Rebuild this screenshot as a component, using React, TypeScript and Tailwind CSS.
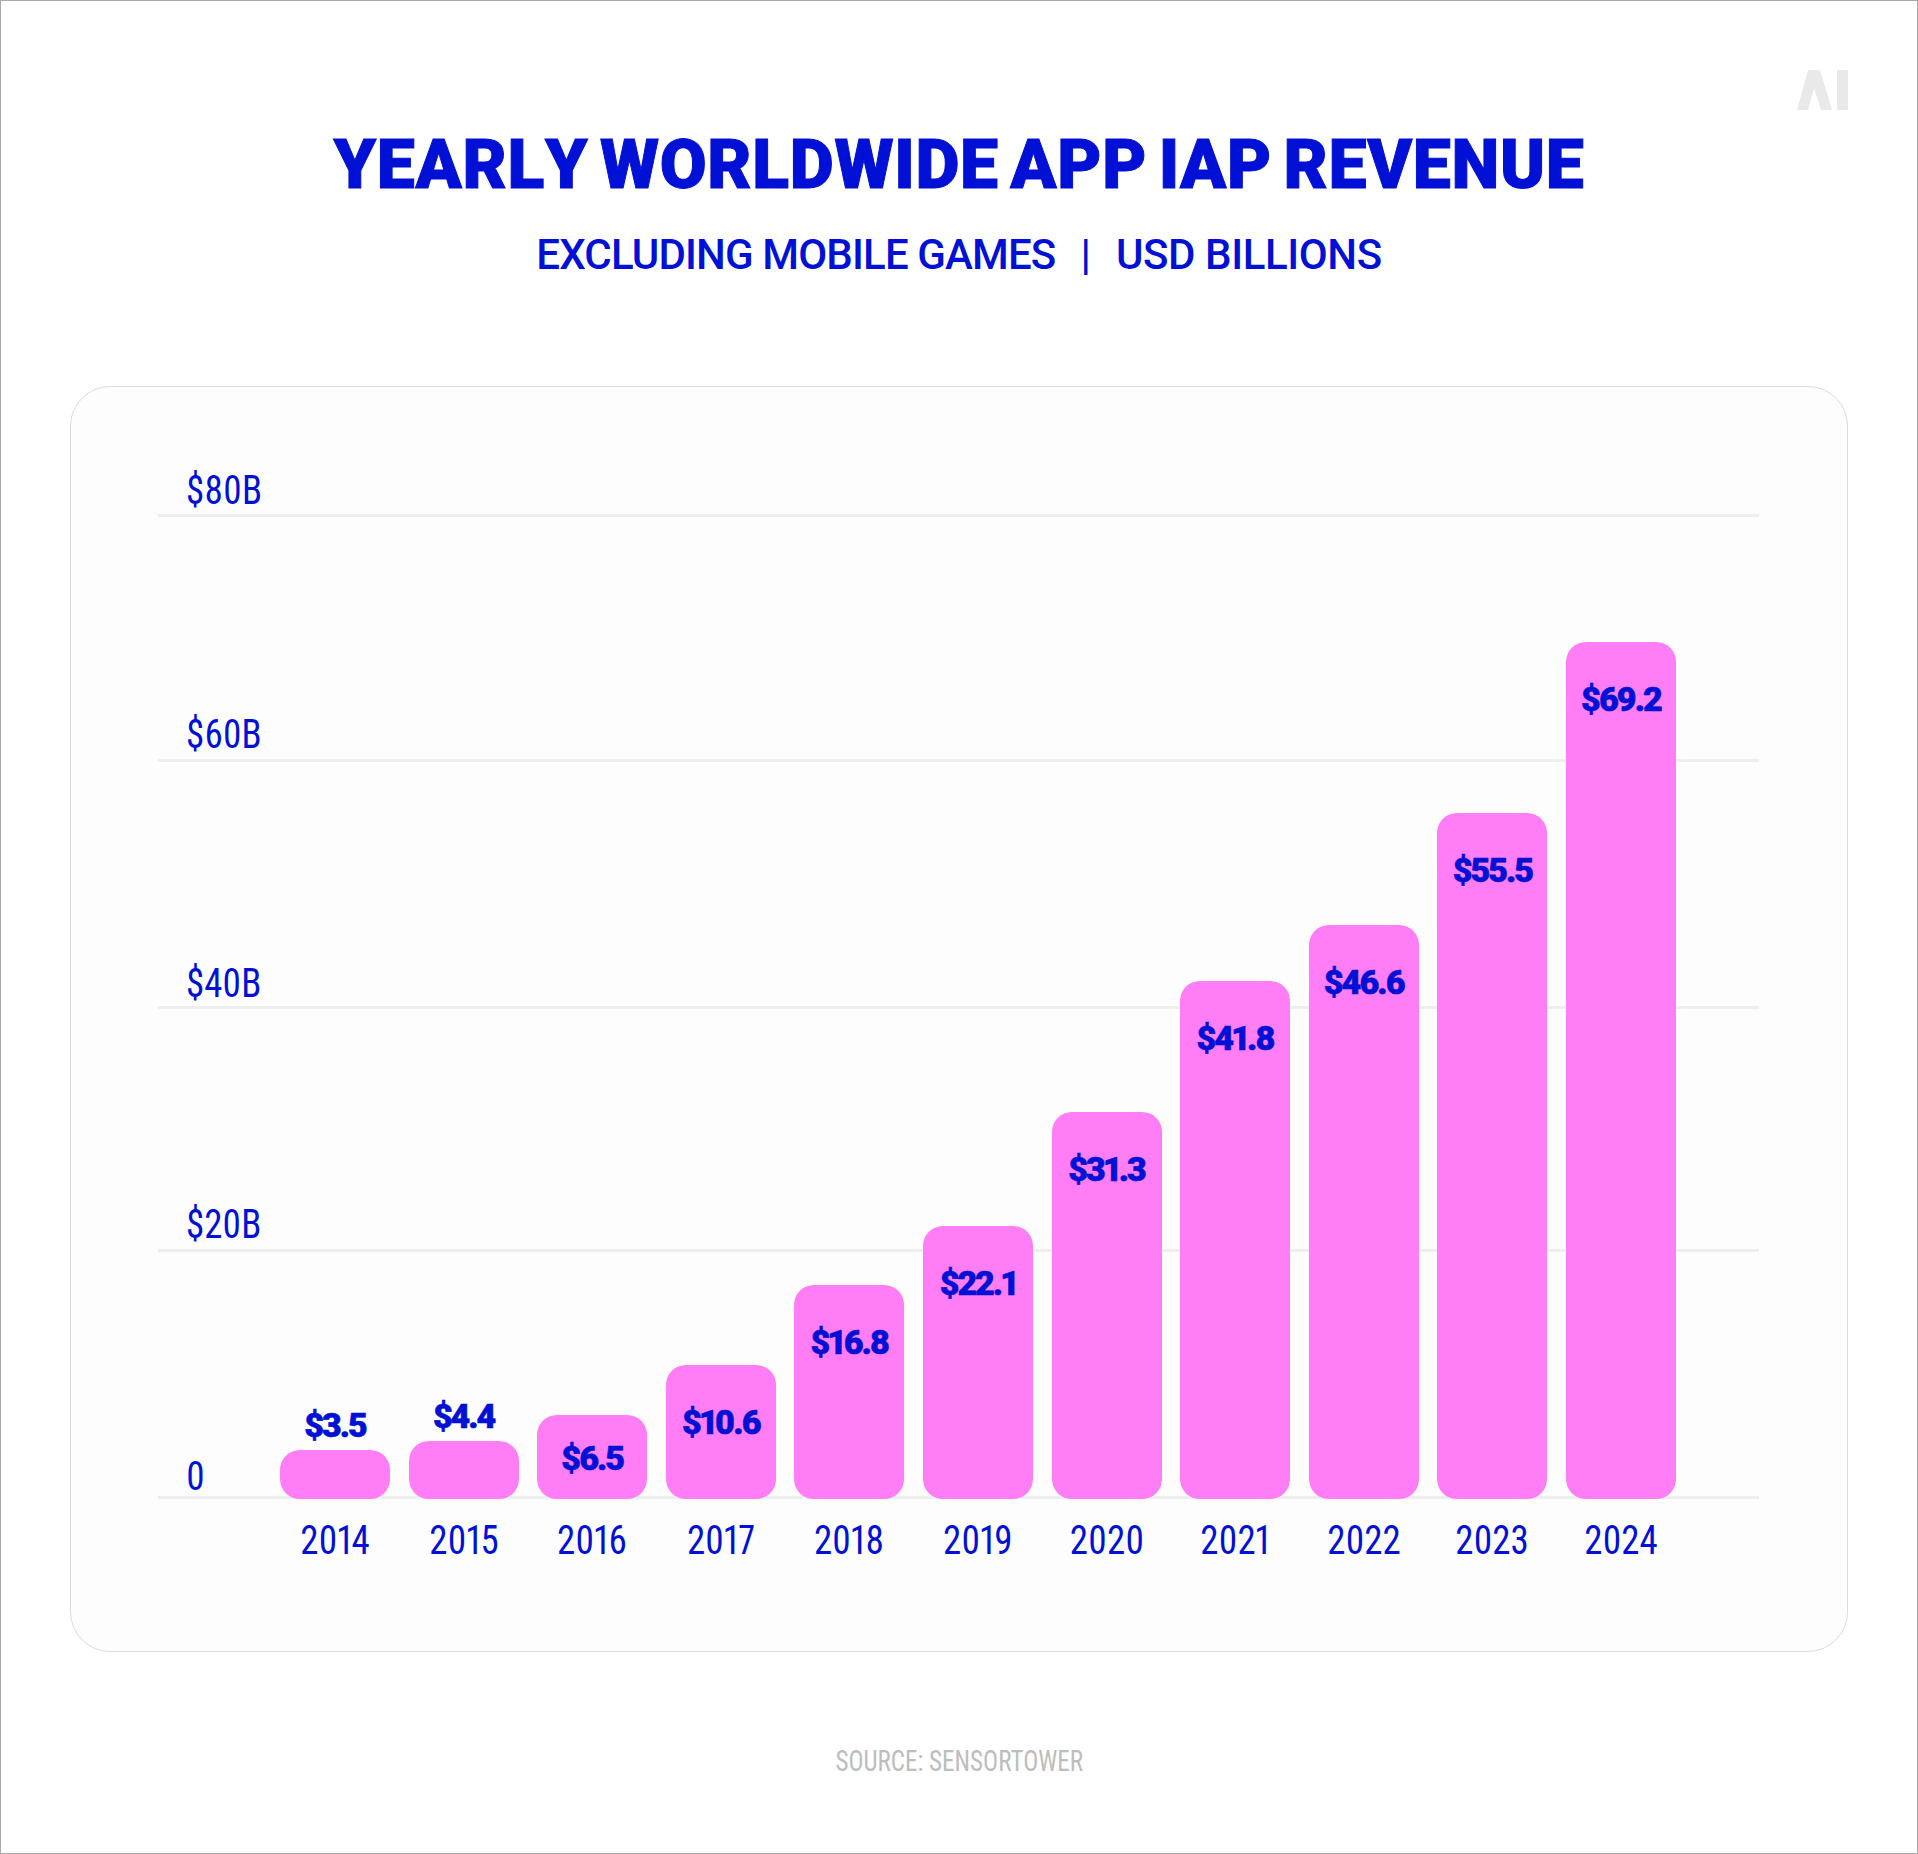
const BLUE = "text-[#0010d4]"

const bars = [
  { year: "2014", value: "$3.5", height: 49, place: "above" },
  { year: "2015", value: "$4.4", height: 58, place: "above" },
  { year: "2016", value: "$6.5", height: 84, place: "center" },
  { year: "2017", value: "$10.6", height: 134, place: "inside" },
  { year: "2018", value: "$16.8", height: 214, place: "inside" },
  { year: "2019", value: "$22.1", height: 273, place: "inside" },
  { year: "2020", value: "$31.3", height: 387, place: "inside" },
  { year: "2021", value: "$41.8", height: 518, place: "inside" },
  { year: "2022", value: "$46.6", height: 574, place: "inside" },
  { year: "2023", value: "$55.5", height: 686, place: "inside" },
  { year: "2024", value: "$69.2", height: 857, place: "inside" },
]

const rows = [
  { label: "$80B", cls: "h-[130px]", nudge: "-mb-[2px]" },
  { label: "$60B", cls: "h-[245px]", nudge: "-mb-[1px]" },
  { label: "$40B", cls: "h-[247px]", nudge: "-mb-[3px]" },
  { label: "$20B", cls: "h-[243px]", nudge: "-mb-[1px]" },
  { label: "0", cls: "h-[247px]", nudge: "-mb-[6px]" },
]

function Logo() {
  return (
    <svg className="absolute left-[1796px] top-[69px]" width="52" height="40" viewBox="0 0 52 40">
      <polygon points="11,0 23,0 35,40 24,40 17,18 11,40 0,40" fill="#e9e9e9" />
      <rect x="40" y="0" width="11" height="40" fill="#e9e9e9" />
    </svg>
  )
}

function Bar({ bar }: { bar: (typeof bars)[number] }) {
  const label = (
    <span
      className={`text-[34px] leading-[40px] font-black tracking-[-2px] proportional-nums [-webkit-text-stroke:0.6px_#0010d4] ${BLUE}`}
    >
      {bar.value}
    </span>
  )
  return (
    <div className="relative flex w-[110px] shrink-0 flex-col items-center">
      {bar.place === "above" && <div className="mb-[5px]">{label}</div>}
      <div
        className={`flex w-full justify-center rounded-[20px] bg-[#ff7ef5] ${
          bar.place === "center" ? "items-center pt-[2px]" : "items-start pt-[37px]"
        }`}
        style={{ height: bar.height }}
      >
        {bar.place !== "above" && label}
      </div>
    </div>
  )
}

export default function App() {
  return (
    <div className="relative flex h-[1854px] w-[1918px] flex-col items-center border border-[#a9a9a9] bg-white font-['Roboto',sans-serif]">
      <Logo />
      <h1
        className={`mt-[124px] text-[68px] leading-[80px] font-black tracking-[0.65px] [font-kerning:none] [word-spacing:-6px] [-webkit-text-stroke:1px_#0010d4] whitespace-nowrap ${BLUE}`}
      >
        YEARLY WORLDWIDE APP IAP REVENUE
      </h1>
      <p className={`mt-[25px] text-[42px] leading-[50px] font-medium whitespace-nowrap ${BLUE}`}>
        <span className="tracking-[-0.85px]">EXCLUDING MOBILE GAMES</span>
        <span className="mx-[25px]">|</span>
        <span className="tracking-[-0.4px]">USD BILLIONS</span>
      </p>
      <div className="mt-[106px] flex h-[1266px] w-[1778px] flex-col rounded-[40px] border border-[#dcdcdc] bg-[#fdfdfd] pl-[87px] pr-[88px]">
        <div className="relative">
          {rows.map((row) => (
            <div
              key={row.label}
              className={`flex items-end border-b-[3px] border-[#eeeeef] pb-[1px] pl-[28px] ${row.cls}`}
            >
              <span
                className={`inline-block origin-left scale-x-[0.92] text-[40px] leading-[48px] font-[450] proportional-nums [font-stretch:75%] ${row.nudge} ${BLUE}`}
              >
                {row.label}
              </span>
            </div>
          ))}
          <div className="absolute inset-x-0 bottom-0 flex items-end gap-[18.6px] pl-[122px]">
            {bars.map((bar) => (
              <Bar key={bar.year} bar={bar} />
            ))}
          </div>
        </div>
        <div className="mt-[17px] flex gap-[18.6px] pl-[122px]">
          {bars.map((bar) => (
            <div
              key={bar.year}
              className={`w-[110px] shrink-0 scale-x-[0.9] text-center text-[41px] leading-[48px] font-[450] proportional-nums [font-stretch:75%] ${BLUE}`}
            >
              {bar.year}
            </div>
          ))}
        </div>
      </div>
      <p className="mt-[91px] scale-x-[0.835] text-[30px] leading-[36px] [font-stretch:75%] text-[#bdbdbd]">
        SOURCE: SENSORTOWER
      </p>
    </div>
  )
}
